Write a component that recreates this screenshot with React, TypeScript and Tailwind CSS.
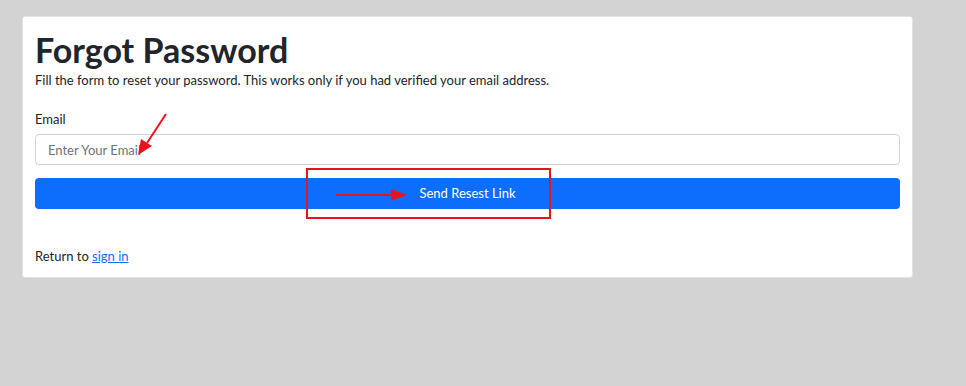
export default function App() {
  return (
    <div className="min-h-[386px] w-[966px] bg-[#d3d3d3] pt-[16px] pl-[22px] font-['Lato','Open_Sans',sans-serif] text-[#212529]">
      <div className="relative w-[891px] rounded-[3px] border border-[#e3e3e3] bg-white px-[12px] pt-[13px] pb-[11px]">
        <h1 className="text-[34px] font-bold leading-[40px]">Forgot Password</h1>
        <p className="text-[13px] leading-[20px]">
          Fill the form to reset your password. This works only if you had verified your email address.
        </p>
        <label className="mt-[19px] block text-[13px] leading-[20px]">Email</label>
        <input
          placeholder="Enter Your Email"
          className="mt-[5px] block h-[31px] w-full rounded-[4px] border border-[#ced4da] px-[12px] text-[13px] placeholder:text-[#6c757d] outline-none"
        />
        <button className="mt-[13px] flex h-[31px] w-full items-center justify-center rounded-[4px] bg-[#0d6efd] text-[13px] text-white">
          Send Resest Link
        </button>
        <p className="mt-[37px] text-[13px] leading-[20px]">
          Return to <a href="#" className="text-[#0d6efd] underline">sign in</a>
        </p>

        {/* annotations */}
        <div className="absolute left-[283px] top-[151px] h-[51px] w-[245px] border-2 border-[#e8141c]" />
        <svg className="absolute left-[100px] top-[90px]" width="60" height="60" viewBox="0 0 60 60">
          <line x1="43" y1="7" x2="24" y2="36" stroke="#e8141c" strokeWidth="2" />
          <polygon points="15,48 18,32 29,39" fill="#e8141c" />
        </svg>
        <svg className="absolute left-[300px] top-[169px]" width="90" height="20" viewBox="0 0 90 20">
          <line x1="13" y1="9" x2="70" y2="9" stroke="#e8141c" strokeWidth="2" />
          <polygon points="68,3 84,9 68,15" fill="#e8141c" />
        </svg>
      </div>
    </div>
  )
}
